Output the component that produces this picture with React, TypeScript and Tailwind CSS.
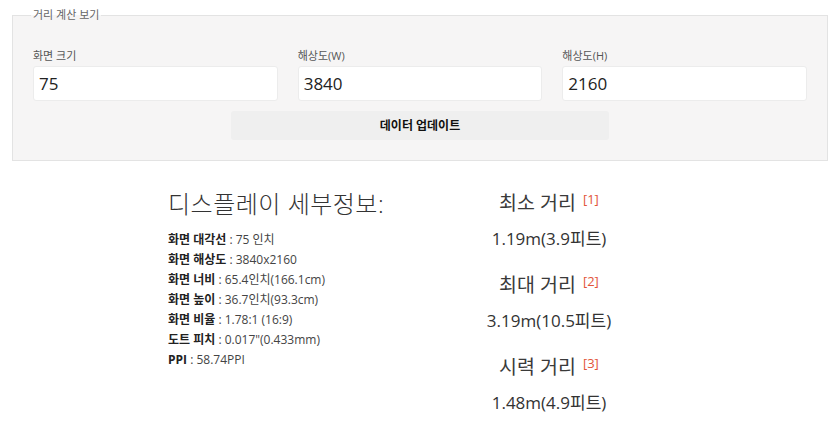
const FONT = "font-['Open_Sans','Noto_Sans_CJK_KR',sans-serif]"

const fields = [
  { label: "화면 크기", value: "75" },
  { label: "해상도(W)", value: "3840" },
  { label: "해상도(H)", value: "2160" },
]

const details = [
  { k: "화면 대각선", v: "75 인치" },
  { k: "화면 해상도", v: "3840x2160" },
  { k: "화면 너비", v: "65.4인치(166.1cm)" },
  { k: "화면 높이", v: "36.7인치(93.3cm)" },
  { k: "화면 비율", v: "1.78:1 (16:9)" },
  { k: "도트 피치", v: "0.017\"(0.433mm)" },
  { k: "PPI", v: "58.74PPI" },
]

const distances = [
  { title: "최소 거리", ref: "[1]", value: "1.19m(3.9피트)" },
  { title: "최대 거리", ref: "[2]", value: "3.19m(10.5피트)" },
  { title: "시력 거리", ref: "[3]", value: "1.48m(4.9피트)" },
]

export default function App() {
  return (
    <div className={`${FONT} min-h-[434px] w-[840px] bg-white text-[#333]`}>
      <div className="px-3 pt-2">
        <fieldset className="h-[153px] border border-[#e3e3e3] bg-[#f6f5f5] px-[20px] pb-4">
          <legend className="-ml-[2px] px-0.5 text-[11px] leading-[14px] text-[#666]">
            거리 계산 보기
          </legend>
          <div className="mt-[26px] grid grid-cols-3 gap-x-[20px]">
            {fields.map((f) => (
              <div key={f.label}>
                <div className="mb-[3px] text-[11px] leading-[15px] text-[#555]">{f.label}</div>
                <input
                  readOnly
                  value={f.value}
                  className="h-[35px] w-full rounded-[3px] border border-[#ececec] bg-white px-[5px] text-[17px] text-[#222] outline-none"
                />
              </div>
            ))}
          </div>
          <div className="mt-[10px] flex justify-center">
            <button className="h-[29px] w-[378px] rounded-[3px] bg-[#efefef] text-[12px] font-bold text-[#111]">
              데이터 업데이트
            </button>
          </div>
        </fieldset>
      </div>

      <div className="mx-auto mt-[22px] grid w-[504px] grid-cols-2">
        <div>
          <h2 className="mt-[5px] text-[24px] font-light leading-[32px] tracking-[0.5px] text-[#333]">
            디스플레이 세부정보:
          </h2>
          <ul className="mt-[10px]">
            {details.map((d) => (
              <li key={d.k} className="text-[12px] leading-[20px] text-[#444]">
                <b className="font-bold text-[#222]">{d.k}</b> : {d.v}
              </li>
            ))}
          </ul>
        </div>
        <div className="flex flex-col items-center pl-[6px]">
          {distances.map((d) => (
            <div key={d.title} className="flex flex-col items-center pb-[14px]">
              <div className="pt-[6px] text-[19.5px] leading-[28px] text-[#3a3a3a]">
                {d.title}
                <span className="relative -top-[6px] ml-[7px] text-[13px] text-[#e2553a]">{d.ref}</span>
              </div>
              <div className="mt-[8px] text-[17px] leading-[24px] text-[#333]">{d.value}</div>
            </div>
          ))}
        </div>
      </div>
    </div>
  )
}
